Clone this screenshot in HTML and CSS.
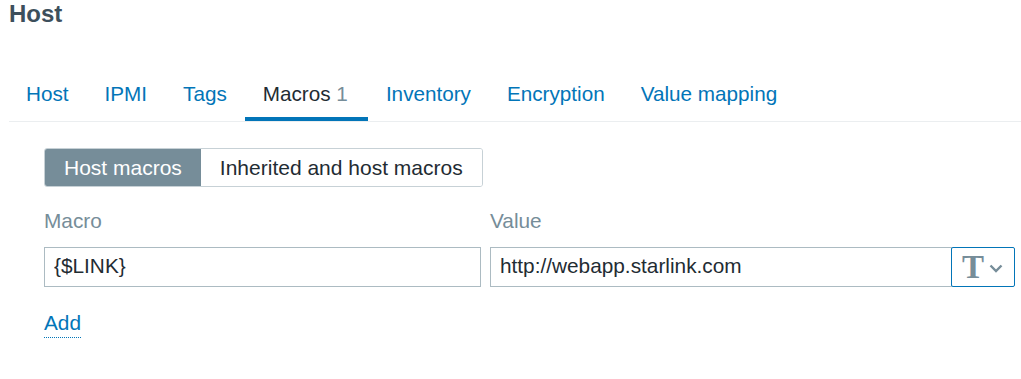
FILE: index.html
```html
<!DOCTYPE html>
<html lang="en">
<head>
    <meta charset="UTF-8">
    <title>Host</title>
    <link rel="stylesheet" href="styles.css">
</head>
<body>
    <h1 class="page-title">Host</h1>

    <ul class="tabs">
        <li class="tab"><a href="#">Host</a></li>
        <li class="tab"><a href="#">IPMI</a></li>
        <li class="tab"><a href="#">Tags</a></li>
        <li class="tab active"><a href="#">Macros <span class="tab-count">1</span></a></li>
        <li class="tab"><a href="#">Inventory</a></li>
        <li class="tab"><a href="#">Encryption</a></li>
        <li class="tab"><a href="#">Value mapping</a></li>
    </ul>

    <div class="tab-content">
        <div class="radio-group">
            <button type="button" class="radio-btn selected">Host macros</button>
            <button type="button" class="radio-btn">Inherited and host macros</button>
        </div>

        <div class="macro-table">
            <div class="macro-col">
                <label class="col-label" for="macro">Macro</label>
                <input type="text" id="macro" class="text-field" value="{$LINK}">
            </div>
            <div class="value-col">
                <label class="col-label" for="value">Value</label>
                <div class="value-field">
                    <input type="text" id="value" class="text-field" value="http://webapp.starlink.com">
                    <button type="button" class="type-btn">
                        <span class="type-glyph">T</span>
                        <svg class="chevron" width="14" height="9" viewBox="0 0 14 9">
                            <polyline points="1.5,1.5 7,7 12.5,1.5" fill="none" stroke="#768d99" stroke-width="2.4"/>
                        </svg>
                    </button>
                </div>
            </div>
        </div>

        <a href="#" class="add-link">Add</a>
    </div>
</body>
</html>
```

FILE: styles.css
```css
body {
    margin: 0;
    font-family: "Liberation Sans", Arial, sans-serif;
    font-size: 20.8px;
    color: #1f2c33;
    background: #fff;
}
.page-title {
    margin: 0;
    padding-left: 9px;
    font-size: 24px;
    line-height: 28px;
    font-weight: bold;
    color: #3d4f5c;
}
.tabs {
    display: flex;
    list-style: none;
    margin: 44px 0 0 9px;
    padding: 0;
    border-bottom: 1px solid #ebeef0;
    font-size: 20.7px;
}
.tab a {
    display: block;
    padding: 10px 18px 11px;
    line-height: 24px;
    color: #0275b8;
    text-decoration: none;
    border-bottom: 4px solid transparent;
}
.tab:first-child a {
    padding-left: 17px;
}
.tab.active a {
    color: #1f2c33;
    border-bottom-color: #0275b8;
}
.tab-count {
    color: #768d99;
    padding-right: 2px;
}
.tab-content {
    padding: 26px 6px 0 44px;
}
.radio-group {
    display: inline-flex;
    border: 1px solid #c7d1d6;
    border-radius: 3px;
    overflow: hidden;
}
.radio-btn {
    font-family: inherit;
    font-size: 21px;
    line-height: 37px;
    padding: 0 19px;
    border: none;
    background: #fff;
    color: #1f2c33;
}
.radio-btn.selected {
    background: #768d99;
    color: #fff;
}
.macro-table {
    display: flex;
    gap: 9px;
    margin-top: 22px;
}
.macro-col {
    width: 437px;
}
.value-col {
    flex: 1;
}
.col-label {
    display: block;
    line-height: 24px;
    color: #768d99;
    margin-bottom: 14px;
}
.text-field {
    box-sizing: border-box;
    width: 100%;
    height: 40px;
    padding: 0 8px 2px 9px;
    border: 1px solid #acbbc2;
    font-family: inherit;
    font-size: 20.8px;
    color: #1f2c33;
    outline: none;
}
.value-field {
    display: flex;
}
.value-field .text-field {
    flex: 1;
}
.type-btn {
    box-sizing: border-box;
    display: flex;
    align-items: center;
    gap: 5px;
    width: 64px;
    height: 40px;
    margin-left: -1px;
    padding: 0 0 0 10px;
    border: 1px solid #0275b8;
    border-radius: 2px;
    background: #fff;
}
.type-glyph {
    font-family: "Liberation Serif", "Times New Roman", serif;
    font-weight: bold;
    font-size: 33px;
    line-height: 32px;
    color: #768d99;
}
.chevron {
    margin-top: 2px;
}
.add-link {
    display: inline-block;
    margin-top: 24px;
    line-height: 24px;
    padding-bottom: 2px;
    color: #0275b8;
    text-decoration: none;
    border-bottom: 1px dotted #0275b8;
}
```
